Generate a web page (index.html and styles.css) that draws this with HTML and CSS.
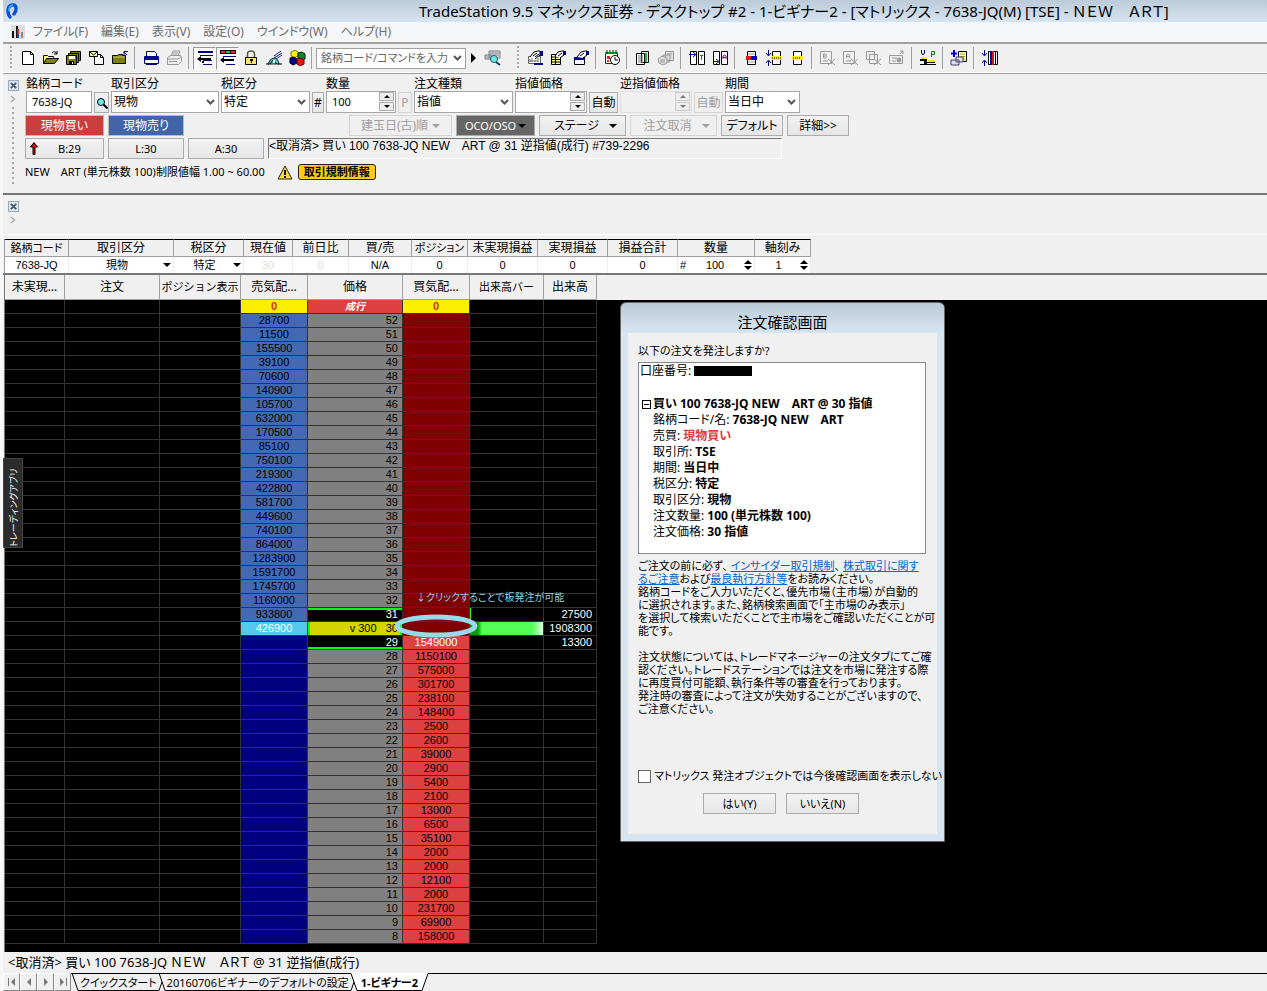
FILE: index.html
```html
<!DOCTYPE html>
<html lang="ja">
<head>
<meta charset="utf-8">
<title>TradeStation 9.5</title>
<link rel="stylesheet" href="styles.css">
</head>
<body>
<div class="app">
  <header class="titlebar">
    <svg class="logo" viewBox="0 0 14 18"><path d="M4 15C1 11 1 4 6 3c5-1 5 5 2 9" fill="none" stroke="#0b4fd8" stroke-width="3.4" stroke-linecap="round"/><path d="M3 9C3 5 5 3 7 3" fill="none" stroke="#3fb4ff" stroke-width="1.6"/></svg>
    <h1 class="title">TradeStation 9.5 マネックス証券 - デスクトップ #2 - 1-ビギナー2 - [マトリックス - 7638-JQ(M) [TSE] - ＮＥＷ　ＡＲＴ]</h1>
  </header>

  <nav class="menubar">
    <svg class="menu-logo" viewBox="0 0 14 14" shape-rendering="crispEdges"><path fill="#ddd" d="M0 0h14v14H0z"/><path fill="#111" d="M1 6h2v7H1zM5 1h2v12H5z"/><path fill="#d22" d="M6 4h2v5H6z"/><path fill="#24a" d="M6 9h2v4H6z"/><path fill="#888" d="M10 7h2v6h-2z"/></svg>
    <button>ファイル(F)</button><button>編集(E)</button><button>表示(V)</button><button>設定(O)</button><button>ウインドウ(W)</button><button>ヘルプ(H)</button>
  </nav>

  <div class="toolbar">
    <span class="grip"></span>
    <button class="tool" aria-label="新規"><svg viewBox="0 0 18 16"><path d="M3.500 1.500h8l3 3v10h-11z" fill="#fff" stroke="#000"/><path d="M11.500 1.500v3h3" fill="none" stroke="#000"/></svg></button>
    <button class="tool" aria-label="開く"><svg viewBox="0 0 18 16"><path d="M1.500 13.500v-8h4l1 1h5v2" fill="#ffff80" stroke="#000"/><path d="M1.500 13.500l3-5h12l-4 5z" fill="#808000" stroke="#000"/><path d="M10 3q3-3 5 1m0-3v3h-3" fill="none" stroke="#000"/></svg></button>
    <button class="tool" aria-label="すべて保存"><svg viewBox="0 0 18 16"><path d="M5.500 1.500h10v9h-10z" fill="#808000" stroke="#000"/><path d="M3.500 3.500h10v9h-10z" fill="#808000" stroke="#000"/><path d="M1.500 5.500h10v9h-10z" fill="#808000" stroke="#000"/><path d="M4 6h6v3H4z" fill="#fff"/><path d="M4 11h5v3H4z" fill="#000"/><path d="M7 12h1v2H7z" fill="#fff"/></svg></button>
    <button class="tool" aria-label="メール"><svg viewBox="0 0 18 16"><path d="M6.500 4.500h6l3 3v7h-9z" fill="#fff" stroke="#000"/><path d="M12.500 4.500v3h3" fill="none" stroke="#000"/><path d="M1.500 1.500h8v5h-8z" fill="#ffffa0" stroke="#000"/><path d="M2 2l3.500 3L9 2" fill="none" stroke="#000"/></svg></button>
    <button class="tool" aria-label="フォルダ"><svg viewBox="0 0 18 16"><path d="M1.500 13.500v-8h5l1-1h4v1h3v8z" fill="#808000" stroke="#000"/><path d="M2 7h12" stroke="#cc6"/><path d="M16 5l-3-3m0 3V1.500h4" fill="none" stroke="#008"/></svg></button>
    <span class="sep"></span>
    <button class="tool" aria-label="印刷"><svg viewBox="0 0 18 16"><path d="M4.500 1.500h8l2 2v3h-10z" fill="#fff" stroke="#008"/><path d="M2.500 6.500h14v7h-14z" fill="#fff" stroke="#008"/><path d="M3 7h13v3H3z" fill="#00a"/><path d="M4 14.500h11" stroke="#008"/></svg></button>
    <button class="tool" aria-label="プリンタ" disabled><svg viewBox="0 0 18 16"><g fill="#eee" stroke="#999"><path d="M6 6l2-5h7l-2 5z"/><path d="M2.500 7.500l3-2h10l1 2v4l-3 3h-11z"/><path d="M3 9h10l3-2M4 11.500h8M8 3h5M7 5h5"/></g></svg></button>
    <span class="sep"></span>
    <button class="tool pressed" aria-label="列表示"><svg viewBox="0 0 18 16"><path d="M2 1h15v2H2zM4 5h13v1H4zM7 10h9v1H7zM7 14h9v1H7z" fill="#008"/><path d="M1 9l4-3v6z"/><path d="M4 8h11v2H4z"/><path d="M6 11h2v2H6z"/></svg></button>
    <button class="tool pressed" aria-label="色付き列"><svg viewBox="0 0 18 16"><path d="M1 0h16v4H1z"/><path d="M2 1h4v2H2z" fill="#f22"/><path d="M7 1h4v2H7z" fill="#0c3"/><path d="M12 1h4v2h-4z" fill="#f22"/><path d="M4 6h13v1H4zM7 14h9v1H7z" fill="#008"/><path d="M1 10l4-3v6z"/><path d="M4 9h11v2H4z"/></svg></button>
    <button class="tool" aria-label="ロック"><svg viewBox="0 0 18 16"><path d="M5.500 7V4q0-3 3.500-3t3.500 3v3" fill="none" stroke="#554" stroke-width="1.500"/><path d="M3.500 7.500h11v7h-11z" fill="#ffe45c" stroke="#000"/><path d="M8 9h3v2H10v2H9v-2H8z"/></svg></button>
    <button class="tool" aria-label="通信"><svg viewBox="0 0 18 16"><path d="M9 6l7-5M9 8l8-5M11 9l6-4" stroke="#228" fill="none"/><path d="M3 14q2-6 6-6t5 6z" fill="#4cc" stroke="#223"/><path d="M5 14l3-4 4 4M1 14h3m9 0h4" stroke="#000" fill="none"/><path d="M8 10h2v3H8z" fill="#fff"/></svg></button>
    <button class="tool" aria-label="キューブ"><svg viewBox="0 0 18 16"><path d="M3 2l4-2 3 2v4L6 8 3 6z" fill="#fe1" stroke="#770"/><path d="M10 3l4-1 3 2v5l-4 1-3-2z" fill="#083" stroke="#020"/><path d="M2 8l4-1 3 2v4l-4 2-3-2z" fill="#009" stroke="#000"/><path d="M9 9l4-1 3 2v4l-4 2-3-2z" fill="#e11" stroke="#600"/></svg></button>
    <span class="sep"></span>
    <select class="command" aria-label="銘柄コード/コマンドを入力"><option>銘柄コード/コマンドを入力</option></select>
    <button class="go" aria-label="実行"></button>
    <button class="tool" aria-label="検索"><svg viewBox="0 0 18 16"><path d="M5 1h11v7H5zM1 5h6v4H1z" fill="#ddd" stroke="#778"/><path d="M6 3h9M6 5h9M2 7h4" stroke="#889"/><circle cx="10" cy="9" r="3.500" fill="#6ee" stroke="#356"/><path d="M12 12l4 3" stroke="#046" stroke-width="2"/></svg></button>
    <span class="grip wide"></span>
    <button class="tool" aria-label="分析"><svg viewBox="0 0 18 16"><path d="M2.500 6.500h12v7h-12z" fill="#fff" stroke="#666"/><path d="M4 12V9m2 3V8m3 4v-2m3 2V8m-9 3h10" stroke="#777"/><path d="M8 14h9" stroke="#008" stroke-width="2"/><path d="M4 7l4-5 4-1h2v4l-5 4M7 6l4-3M9 7l4-3" fill="#fff" stroke="#000"/><path d="M14 1h3v5h-3z" fill="#008"/></svg></button>
    <button class="tool" aria-label="表の書式"><svg viewBox="0 0 18 16"><path d="M2.500 4.500h9v10h-9z" fill="#ff9" stroke="#000"/><path d="M3 7h9M3 9.500h9M3 12h9M6.500 5v9" stroke="#000"/><path d="M6 6l3-4 4-1h2v4l-4 3M9 6l4-3" fill="#fff" stroke="#000"/><path d="M14 1h3v4h-3z" fill="#008"/></svg></button>
    <button class="tool" aria-label="ウィンドウ書式"><svg viewBox="0 0 18 16"><path d="M2.500 7.500h10v7h-10z" fill="#fff" stroke="#000"/><path d="M2 7h11v3H2z" fill="#008"/><path d="M5 7l4-5 4-1h2v4l-4 3M8 6l4-3" fill="#fff" stroke="#000"/><path d="M14 1h3v4h-3z" fill="#008"/></svg></button>
    <span class="sep"></span>
    <button class="tool" aria-label="スケジュール"><svg viewBox="0 0 18 16"><path d="M2.500 2.500h12v11h-12z" fill="#fff" stroke="#040"/><path d="M2 2h13v2H2z" fill="#0a3"/><path d="M4 0v4m3-4v4m3-4v4m3-4v4" stroke="#040"/><path d="M4 6h3v3H4zM4 10h2v2H4z" fill="#d22"/><circle cx="12" cy="10" r="4.500" fill="#fff" stroke="#000"/><path d="M12 7v3h3" stroke="#000" fill="none"/></svg></button>
    <span class="sep"></span>
    <button class="tool" aria-label="レポート"><svg viewBox="0 0 18 16"><path d="M7.500 1.500h7v11h-7zM2.500 3.500h8v11h-8z" fill="#fff" stroke="#000"/><path d="M4 6h5M4 8h5M4 10h5M4 12h5" stroke="#777"/><path d="M11 3h2v9h-2z" fill="#2b3"/></svg></button>
    <button class="tool" aria-label="配信" disabled><svg viewBox="0 0 18 16"><g fill="#ddd" stroke="#999"><path d="M8.500 1.500h8v9h-8zM6 5h7v7H6z"/><path d="M1 9l4-3 5 2v5l-4 2-4-2z"/><path d="M10 4h5M3 10h5M3 12h5"/></g></svg></button>
    <span class="sep"></span>
    <button class="tool" aria-label="T列"><svg viewBox="0 0 18 16"><path d="M2.500 1.500h6v13h-6zM10.500 1.500h6v13h-6z" fill="#fff" stroke="#000"/><path d="M1 4.500h6M5 2l3 2.500L5 7" fill="none" stroke="#00a"/><path d="M12 5.500h3M13.500 5v5" stroke="#080"/></svg></button>
    <button class="tool" aria-label="A列"><svg viewBox="0 0 18 16"><path d="M2.500 1.500h6v13h-6zM10.500 1.500h6v13h-6z" fill="#fff" stroke="#000"/><path d="M2 11.500h5M5 9l3 2.500L5 14" fill="none" stroke="#00a"/><path d="M12 9V6l1.500-1L15 6v3m-3-1.500h3" fill="none" stroke="#808"/></svg></button>
    <span class="sep"></span>
    <button class="tool" aria-label="売買行"><svg viewBox="0 0 18 16"><path d="M5.500 1.500h8v13h-8z" fill="#fff" stroke="#000"/><path d="M6 4h7M6 12h7" stroke="#999"/><path d="M4 6h6v4H4z" fill="#e11"/><path d="M9 6h6v4H9z" fill="#00c"/></svg></button>
    <button class="tool" aria-label="中央揃え"><svg viewBox="0 0 18 16"><path d="M7.500 1.500h8v13h-8z" fill="#fff" stroke="#000"/><path d="M6 6h11v4H6z" fill="#fe1"/><path d="M3.500 0v5M1 3l2.500 3L6 3M3.500 16v-5M1 13l2.500-3L6 13" fill="none" stroke="#008"/><path d="M7 8h1m1 0h1m1 0h1m1 0h1m1 0h1" stroke="#000"/></svg></button>
    <button class="tool" aria-label="行"><svg viewBox="0 0 18 16"><path d="M5.500 1.500h8v13h-8z" fill="#fff" stroke="#000"/><path d="M4 6h11v4H4z" fill="#fe1"/><path d="M5 8h1m1 0h1m1 0h1m1 0h1" stroke="#000"/></svg></button>
    <span class="sep"></span>
    <button class="tool" aria-label="B取消" disabled><svg viewBox="0 0 18 16"><g fill="none" stroke="#999"><path d="M1.500 1.500h11v12h-11zM4.500 4v4h2l1-1-1-1h-2m0-2h2l1 1-1 1M4 11h5M9 9l7 6M16 9l-7 6"/></g></svg></button>
    <button class="tool" aria-label="A取消" disabled><svg viewBox="0 0 18 16"><g fill="none" stroke="#999"><path d="M1.500 1.500h11v12h-11zM4.500 8V5l1.500-1 1.500 1v3m-3-1.500h3M4 11h5M9 9l7 6M16 9l-7 6"/></g></svg></button>
    <button class="tool" aria-label="全取消" disabled><svg viewBox="0 0 18 16"><g fill="#eee" stroke="#999"><path d="M1.500 1.500h8v8h-8zM4.500 4.500h8v9h-8z"/><path d="M9 9l7 6M16 9l-7 6"/></g></svg></button>
    <button class="tool" aria-label="成行決済" disabled><svg viewBox="0 0 18 16"><g fill="none" stroke="#999"><path d="M1.500 5.500h13v8h-13zM4 8h5M4 11h4M12 4l3-3m-3 0h3v3"/><circle cx="11" cy="10" r="2" fill="#999"/></g></svg></button>
    <span class="sep"></span>
    <button class="tool" aria-label="VP"><svg viewBox="0 0 18 16"><path d="M2.500 0v3l1.500 2 1.500-2V0" fill="none" stroke="#008"/><path d="M12.500 7V1.500h3v3h-3" fill="none" stroke="#080"/><path d="M2 7h6v2H2z" fill="#fe1"/><path d="M1 9h7v2H1zM5 11h3v3H5zM8 12h8v1H8zM1 14h16v1H1z"/><path d="M9 10h7v2H9z" fill="#fe1"/></svg></button>
    <span class="sep"></span>
    <button class="tool" aria-label="追加"><svg viewBox="0 0 18 16"><path d="M8.500 1.500h8v10h-8z" fill="#ffc" stroke="#000"/><path d="M10 4h5M10 6.500h5M10 9h5" stroke="#aa0"/><path d="M4 0v7M1 3.500h6" stroke="#00d" stroke-width="2"/><path d="M6 7h7v5H6zM1 10h8v5H1z" fill="#dde" stroke="#446"/></svg></button>
    <span class="sep"></span>
    <button class="tool" aria-label="列幅"><svg viewBox="0 0 18 16"><path d="M7.500 1.500h9v13h-9z" fill="#fff" stroke="#000"/><path d="M9 1h2v14H9z" fill="#00a"/><path d="M11 1h2v14h-2z" fill="#d11"/><path d="M14 1h1v14h-1z"/><path d="M3.500 0v5M1 3l2.500 3L6 3M3.500 16v-5M1 13l2.500-3L6 13" fill="none" stroke="#008"/></svg></button>
  </div>

  <section class="orderbar">
    <div class="handle"><button class="mini-close" aria-label="閉じる"><svg viewBox="0 0 10 10"><path d="M2 2l6 6M8 2l-6 6" stroke="#46586c" stroke-width="2"/></svg></button><svg class="chev" viewBox="0 0 6 8"><path d="M1 1l3.500 3L1 7" fill="none" stroke="#aaa" stroke-width="1.500"/></svg><span class="dots"></span></div>
    <div class="order">
      <div class="fields">
        <label class="field w-code"><span>銘柄コード</span><input class="box num" value="7638-JQ"></label>
        <button class="btn small w-search" aria-label="銘柄検索"><svg viewBox="0 0 12 12"><circle cx="5" cy="5" r="3.500" fill="#6ee" stroke="#000"/><path d="M7.500 7.500l4 4" stroke="#000" stroke-width="2"/></svg></button>
        <label class="field w-kind"><span>取引区分</span><select class="box"><option>現物</option></select></label>
        <label class="field w-tax"><span>税区分</span><select class="box"><option>特定</option></select></label>
        <button class="btn small w-hash">#</button>
        <label class="field w-qty"><span>数量</span><span class="spin"><input class="box num" value="100"><i class="arrows"><b></b><b></b></i></span></label>
        <button class="btn small w-p" disabled>P</button>
        <label class="field w-type"><span>注文種類</span><select class="box"><option>指値</option></select></label>
        <label class="field w-price"><span>指値価格</span><span class="spin"><input class="box num"><i class="arrows"><b></b><b></b></i></span></label>
        <button class="btn small w-auto">自動</button>
        <label class="field w-price"><span>逆指値価格</span><span class="spin off"><input class="box num" disabled><i class="arrows"><b></b><b></b></i></span></label>
        <button class="btn small w-auto" disabled>自動</button>
        <label class="field w-term"><span>期間</span><select class="box"><option>当日中</option></select></label>
      </div>
      <div class="actions">
        <button class="btn buy w-a">現物買い</button><button class="btn sell w-b">現物売り</button>
        <div class="actions right">
          <button class="btn w-c" disabled>建玉日(古)順<i class="tri"></i></button><button class="btn dark w-a">OCO/OSO<i class="tri"></i></button><button class="btn w-d">ステージ　<i class="tri"></i></button><button class="btn w-d" disabled>注文取消　<i class="tri"></i></button><button class="btn w-e">デフォルト</button><button class="btn w-e">詳細&gt;&gt;</button>
        </div>
      </div>
      <div class="actions prices">
        <button class="btn w-a up"><svg viewBox="0 0 8 13"><path d="M4 .500L7.500 5H5v7.500H3V5H.500z" fill="#e00" stroke="#000"/></svg><span>B:29</span></button><button class="btn w-b">L:30</button><button class="btn w-b">A:30</button>
        <output class="readout">&lt;取消済&gt; 買い 100 7638-JQ NEW　ART @ 31 逆指値(成行) #739-2296</output>
      </div>
      <div class="info"><span>NEW　ART (単元株数 100)制限値幅 1.00 ~ 60.00</span><svg class="warn" viewBox="0 0 16 15"><path d="M8 1l7 13H1z" fill="#fd2" stroke="#222" stroke-linejoin="round"/><path d="M8 5v5m0 1v2" stroke="#000" stroke-width="2"/></svg><button class="rule">取引規制情報</button></div>
    </div>
  </section>

  <section class="emptybar"><div class="handle"><button class="mini-close" aria-label="閉じる"><svg viewBox="0 0 10 10"><path d="M2 2l6 6M8 2l-6 6" stroke="#46586c" stroke-width="2"/></svg></button><svg class="chev" viewBox="0 0 6 8"><path d="M1 1l3.500 3L1 7" fill="none" stroke="#aaa" stroke-width="1.500"/></svg></div></section>

  <div class="strip">
    <table class="summary">
      <colgroup><col class="s64"><col class="s105"><col class="s70"><col class="s49"><col class="s56"><col class="s63"><col class="s56"><col class="s70"><col class="s70"><col class="s70"><col class="s77"><col class="s56"></colgroup>
      <thead><tr><th class="tight">銘柄コード</th><th>取引区分</th><th>税区分</th><th>現在値</th><th>前日比</th><th>買/売</th><th class="tight">ポジション</th><th>未実現損益</th><th>実現損益</th><th>損益合計</th><th>数量</th><th>軸刻み</th></tr></thead>
      <tbody><tr><td>7638-JQ</td><td><div class="pick"><span>現物</span><i class="tri"></i></div></td><td><div class="pick"><span>特定</span><i class="tri"></i></div></td><td class="faint">30</td><td class="faint">0</td><td>N/A</td><td>0</td><td>0</td><td>0</td><td>0</td><td><div class="pick"><em>#</em><span>100</span><i class="ud"></i></div></td><td><div class="pick"><span>1</span><i class="ud"></i></div></td></tr></tbody>
    </table>
  </div>

  <main class="stage">
    <table class="matrix">
      <colgroup><col class="m60"><col class="m95"><col class="m81"><col class="m67"><col class="m95"><col class="m67"><col class="m74"><col class="m53"></colgroup>
      <thead><tr><th>未実現…</th><th>注文</th><th class="tight">ポジション表示</th><th>売気配…</th><th>価格</th><th>買気配…</th><th class="tight">出来高バー</th><th>出来高</th></tr></thead>
      <tbody id="rows"></tbody>
    </table>
    <button class="side-tab">トレーディングアプリ</button>

    <section class="dialog" role="dialog" aria-labelledby="dlg-title">
      <h2 id="dlg-title">注文確認画面</h2>
      <div class="dialog-body">
        <p class="ask-text">以下の注文を発注しますか?</p>
        <div class="tree">
          <div class="acct">口座番号: <span class="mask"></span></div>
          <div class="node"><svg viewBox="0 0 9 9" shape-rendering="crispEdges"><path d="M.500.500h8v8h-8zM2 4.500h5" fill="none" stroke="#000"/></svg><b>買い 100 7638-JQ NEW　ART @ 30 指値</b></div>
          <div class="leaf">銘柄コード/名: <b>7638-JQ NEW　ART</b></div>
          <div class="leaf">売買: <b class="red">現物買い</b></div>
          <div class="leaf">取引所: <b>TSE</b></div>
          <div class="leaf">期間: <b>当日中</b></div>
          <div class="leaf">税区分: <b>特定</b></div>
          <div class="leaf">取引区分: <b>現物</b></div>
          <div class="leaf">注文数量: <b>100 (単元株数 100)</b></div>
          <div class="leaf">注文価格: <b>30 指値</b></div>
        </div>
        <p class="note">ご注文の前に必ず、 <a href="#">インサイダー取引規制</a>、 <a href="#">株式取引に関す<br>るご注意</a>および<a href="#">最良執行方針等</a>をお読みください。<br>銘柄コードをご入力いただくと、優先市場（主市場）が自動的<br>に選択されます。また、銘柄検索画面で「主市場のみ表示」<br>を選択して検索いただくことで主市場をご確認いただくことが可<br>能です。</p>
        <p class="note last">注文状態については、トレードマネージャーの注文タブにてご確<br>認ください。トレードステーションでは注文を市場に発注する際<br>に再度買付可能額、執行条件等の審査を行っております。<br>発注時の審査によって注文が失効することがございますので、<br>ご注意ください。</p>
        <label class="check"><input type="checkbox">マトリックス 発注オブジェクトでは今後確認画面を表示しない</label>
        <div class="answers"><button class="btn">はい(Y)</button><button class="btn">いいえ(N)</button></div>
      </div>
    </section>
  </main>

  <div class="status">&lt;取消済&gt; 買い 100 7638-JQ ＮＥＷ　ＡＲＴ @ 31 逆指値(成行)</div>

  <nav class="tabs">
    <button class="nav" aria-label="最初"><svg viewBox="0 0 10 8"><path d="M1 0h1v8H1zM8 0v8L4 4z"/></svg></button><button class="nav" aria-label="前"><svg viewBox="0 0 10 8"><path d="M7 0v8L3 4z"/></svg></button><button class="nav" aria-label="次"><svg viewBox="0 0 10 8"><path d="M3 0v8l4-4z"/></svg></button><button class="nav" aria-label="最後"><svg viewBox="0 0 10 8"><path d="M2 0v8l4-4zM8 0h1v8H8z"/></svg></button>
    <svg class="slant" viewBox="0 0 8 18"><path d="M0 .500h8M1 0l6 17.500h1" fill="none" stroke="#000"/></svg>
    <button class="tab">クイックスタート</button>
    <svg class="slant" viewBox="0 0 8 18"><path d="M0 .500h8M0 17.500h1L4 9M1 0l6 17.500h1" fill="none" stroke="#000"/></svg>
    <button class="tab">20160706ビギナーのデフォルトの設定</button>
    <svg class="slant" viewBox="0 0 8 18"><path d="M1 0l6 17h1V0z" fill="#fff"/><path d="M0 17.500h1L4 9M0 .500h1l6 17h1" fill="none" stroke="#000"/></svg>
    <button class="tab active">1-ビギナー2</button>
    <svg class="slant" viewBox="0 0 8 18"><path d="M0 0h7L1 17H0z" fill="#fff"/><path d="M0 17.500h1L7 .500h1" fill="none" stroke="#000"/></svg>
    <span class="rest"></span>
  </nav>
</div>
<script src="matrix.js"></script>
</body>
</html>
```

FILE: styles.css
```css
* { box-sizing: border-box; }
body { margin: 0; background: #f0f0f0; color: #000; font: 12px/14px "Noto Sans", "Noto Sans CJK JP", sans-serif; font-feature-settings: "palt"; }
button, input, select { font: inherit; font-feature-settings: inherit; color: inherit; margin: 0; padding: 0; border: 0; background: none; border-radius: 0; white-space: nowrap; }
h1, h2, p { margin: 0; font-weight: normal; }
i, em { font-style: normal; }
.app { min-height: 100vh; display: flex; flex-direction: column; border-left: 3px solid #f7f7f7; }

.titlebar { height: 22px; display: flex; align-items: center; background: linear-gradient(#bccbd9, #d7e4f1); }
.logo { width: 14px; height: 18px; margin-left: 3px; }
.title { margin-left: 399px; font-size: 15px; line-height: 22px; white-space: nowrap; }

.menubar { height: 22px; display: flex; align-items: center; gap: 13px; padding-bottom: 1px; background: #f5f6f7; border-bottom: 2px solid #a0a0a0; font-size: 12px; color: #6d6d6d; }
.menu-logo { width: 14px; height: 14px; margin: 0 -5px 0 8px; }

.toolbar { height: 29px; display: flex; align-items: center; border-bottom: 1px solid #fff; }
.tool { width: 23px; height: 23px; flex: none; display: grid; place-items: center; }
.tool svg { width: 18px; height: 16px; }
.tool.pressed { background: #f8f8f8; border: 1px solid; border-color: #999 #fff #fff #999; }
.sep { width: 8px; height: 22px; flex: none; background: linear-gradient(90deg, transparent 3px, #a0a0a0 3px, #a0a0a0 4px, transparent 4px); }
.grip { width: 13px; height: 24px; flex: none; background: linear-gradient(#aaa 2px, transparent 2px) 7px 0 / 2px 4px repeat-y; }
.grip.wide { width: 19px; background-position: 13px 0; }
.command { width: 150px; height: 21px; padding-left: 4px; border: 1px solid #a0a0a0; color: #666; font-size: 11px; }
.go { width: 15px; height: 16px; flex: none; display: grid; place-items: center; }
.go::before { content: ""; border: 5px solid transparent; border-left-color: #000; border-right: 0; }

select { appearance: none; background: #fff url("data:image/svg+xml,%3Csvg xmlns='http://www.w3.org/2000/svg' width='9' height='6'%3E%3Cpath d='M1 1l3.500 3.500L8 1' fill='none' stroke='%23555' stroke-width='2'/%3E%3C/svg%3E") no-repeat right 3px center; }

.orderbar { height: 122px; display: flex; border-top: 1px solid #a0a0a0; border-bottom: 2px solid #777; }
.handle { width: 22px; flex: none; display: flex; flex-direction: column; align-items: flex-start; padding: 6px 0 8px 5px; gap: 4px; }
.mini-close { width: 11px; height: 11px; border: 1px solid #9ab; background: #dde7f1; display: grid; }
.mini-close svg { width: 9px; height: 9px; }
.chev { width: 6px; height: 8px; margin-left: 2px; }
.dots { flex: 1; width: 8px; background: linear-gradient(#aaa 2px, transparent 2px) 4px 0 / 2px 5px repeat-y; }
.order { flex: 1; padding-top: 3px; min-width: 0; }
.fields { display: flex; align-items: flex-end; gap: 2px; padding-left: 1px; }
.field { display: flex; flex-direction: column; white-space: nowrap; }
.box { width: 100%; height: 22px; padding-left: 2px; border: 1px solid #a6a6a6; background-color: #fff; }
.num { padding: 0 0 2px 5px; font-size: 11px; }
.spin { display: flex; position: relative; }
.arrows { position: absolute; right: 2px; top: 1px; display: grid; gap: 1px; }
.arrows b { width: 15px; height: 9px; border: 1px solid #aaa; background: #eee; display: grid; place-items: center; }
.arrows b::before { content: ""; border: 3px solid transparent; border-bottom-color: #000; border-top: 0; }
.arrows b + b::before { border: 3px solid transparent; border-top-color: #000; border-bottom: 0; }
.off .box { background: #f0f0f0; border-color: #ddd; }
.off .arrows { opacity: .5; }
.btn { height: 21px; border: 1px solid #acacac; background: linear-gradient(#f2f2f2, #e6e6e6); display: flex; align-items: center; justify-content: center; gap: 4px; flex: none; }
.btn:disabled { color: #a0a0a0; border-color: #d4d4d4; background: #efefef; }
.small svg { width: 12px; height: 12px; }
.tri { border: 4px solid transparent; border-top-color: currentColor; border-bottom: 0; }
.btn.buy { background: #cb3e3e; border-color: #bbb; color: #fff; }
.btn.sell { background: #4265a8; border-color: #bbb; color: #fff; }
.btn.dark { background: #666; color: #fff; font-size: 11px; gap: 2px; }
.dark .tri { border-top-color: #000; }
.btn.up { justify-content: flex-start; padding-left: 4px; gap: 20px; }
.up svg { width: 8px; height: 13px; }
.actions { display: flex; gap: 4px; margin-top: 2px; }
.actions.right { margin: 0 0 0 161px; }
.prices .btn { font-size: 11px; }
.readout { width: 514px; height: 21px; border: 1px solid; border-color: #777 #fff #fff #777; white-space: nowrap; font-family: "Liberation Sans", "Noto Sans CJK JP", sans-serif; }
.info { display: flex; align-items: center; margin-top: 5px; font-size: 11px; line-height: 16px; white-space: nowrap; }
.warn { width: 16px; height: 15px; margin: 0 5px 0 12px; }
.rule { height: 16px; padding: 0 5px; border: 1px solid #222; border-radius: 3px; background: #fc1; font-weight: bold; line-height: 14px; }
.w-code { width: 66px; } .w-search { width: 15px; } .w-kind { width: 108px; } .w-tax { width: 89px; } .w-hash { width: 12px; } .w-qty { width: 70px; } .w-p { width: 14px; } .w-type { width: 99px; } .w-price { width: 72px; } .w-auto { width: 29px; } .w-term { width: 75px; }
.w-a { width: 79px; } .w-b { width: 76px; } .w-c { width: 103px; } .w-d { width: 87px; } .w-e { width: 62px; }

.emptybar { height: 40px; border-bottom: 1px solid #fff; }

.strip { height: 40px; padding: 4px 0 0 1px; border-bottom: 2px solid #777; }
table { border-collapse: separate; border-spacing: 0; table-layout: fixed; }
th, td { padding: 0; font-weight: normal; text-align: center; white-space: nowrap; }
.summary { width: 807px; border-left: 1px solid #a0a0a0; }
.summary th { height: 18px; border: 1px solid #a0a0a0; border-width: 1px 1px 1px 0; border-top-color: #000; }
.summary td { height: 16px; background: #fff; border-right: 1px solid #eee; font-size: 11px; font-family: "Liberation Sans", "Noto Sans CJK JP", sans-serif; }
.summary .faint { color: #ddd; }
.pick { display: flex; align-items: center; padding: 0 2px; font-size: 11px; }
.pick span { flex: 1; }
.ud { width: 8px; height: 10px; background: #000; clip-path: polygon(50% 0, 100% 40%, 0 40%, 0 60%, 100% 60%, 50% 100%, 0 60%, 0 40%); }
.s64 { width: 64px; } .s105 { width: 105px; } .s70 { width: 70px; } .s49 { width: 49px; } .s56 { width: 56px; } .s63 { width: 63px; } .s77 { width: 77px; }

.stage { flex: 1; position: relative; background: linear-gradient(#f0f0f0 25px, #000 25px); border-left: 1px solid #777; margin-left: 1px; }
.matrix { width: 592px; height: 100%; font: 11px/13px "Liberation Sans", "Noto Sans CJK JP", sans-serif; }
.matrix th { height: 25px; border-bottom: 1px solid #a0a0a0; border-right: 1px solid #a0a0a0; font: 12px/14px "Noto Sans", "Noto Sans CJK JP", sans-serif; }
.summary .tight, .matrix .tight { font-size: 11px; }
.matrix td { height: 14px; border-right: 1px solid #333; border-bottom: 1px solid #333; color: #fff; }
.matrix .fill td { height: auto; border-bottom: 0; }
.matrix .zero { background: #fbee00; color: #d62f2f; font-weight: bold; }
.matrix .market { background: #dc4040; color: #fff; font-weight: bold; font-style: italic; font-size: 10px; }
.matrix .ask { background: #4369b2; color: #000; }
.matrix .ask-best { background: #54c8ee; color: #fff; }
.matrix .navy { background: #000080; }
.matrix .price { background: #808080; color: #000; text-align: right; padding-right: 4px; }
.matrix .range { background: #000; color: #fff; }
.matrix .high { box-shadow: inset 0 2px #0f0; }
.matrix .low { box-shadow: inset 0 -2px #0f0; }
.matrix .last { background: #d4d400; color: #000; box-shadow: inset 2px 0 #0f0, inset -2px 0 #0f0; }
.matrix .maroon { background: #800000; position: relative; }
.matrix .bid { background: #dc4040; color: #000; }
.matrix .bid-best { background: #dc4040; color: #fff; }
.matrix .volume { text-align: right; padding-right: 4px; }
.matrix .bar { background: linear-gradient(90deg, #00a000 8px, #5f5 12px, #5f5 62px, #dfd 73px); }
.matrix .sliver { background: linear-gradient(90deg, #3f3 1px, #000 1px); }
.tip { position: absolute; z-index: 1; left: 13px; top: -4px; color: #8fd0e8; font: 10px/14px "Noto Sans CJK JP", sans-serif; font-feature-settings: "palt"; }
.ring { position: absolute; z-index: 2; left: -10px; top: -8px; width: 86px; height: 24px; }
.m60 { width: 60px; } .m95 { width: 95px; } .m81 { width: 81px; } .m67 { width: 67px; } .m74 { width: 74px; } .m53 { width: 53px; }
.side-tab { position: absolute; left: -2px; top: 183px; width: 20px; height: 90px; background: #2b2b2b; border: 1px solid #444; color: #fff; font-size: 9px; line-height: 14px; writing-mode: vertical-rl; text-orientation: sideways; transform: rotate(180deg); text-align: left; padding-right: 2px; }

.dialog { position: absolute; left: 615px; top: 27px; width: 325px; height: 540px; padding: 0 7px 7px; display: flex; flex-direction: column; border: 1px solid #666; border-radius: 6px 6px 0 0; background: linear-gradient(#bccbd9, #d7e4f1 30px); }
.dialog h2 { height: 30px; padding-top: 9px; font-size: 15px; line-height: 20px; text-align: center; }
.dialog-body { flex: 1; background: #f0f0f0; padding: 11px 0 0 10px; white-space: nowrap; font-size: 11px; }
.tree { width: 288px; height: 192px; margin-top: 4px; padding: 0 1px; border: 1px solid #828790; background: #fff; font-size: 12px; line-height: 16px; }
.mask { display: inline-block; width: 58px; height: 10px; background: #000; vertical-align: -1px; }
.node { display: flex; align-items: center; gap: 2px; margin-top: 17px; padding-left: 2px; }
.node svg { width: 9px; height: 9px; }
.leaf { padding-left: 13px; }
.red { color: #dc3c3c; }
.note { margin-top: 5px; line-height: 13px; }
.note.last { margin-top: 13px; }
.note a { color: #06c; }
.check { display: flex; align-items: center; gap: 3px; margin-top: 54px; }
.check input { appearance: none; width: 13px; height: 13px; flex: none; border: 1px solid #666; background: #fff; }
.answers { display: flex; gap: 10px; margin: 10px 0 0 65px; }
.answers .btn { width: 73px; }

.status { height: 21px; padding: 0 5px; font-size: 13px; line-height: 20px; white-space: nowrap; }
.tabs { height: 18px; display: flex; align-items: stretch; }
.nav { width: 17px; display: grid; place-items: center; border: 1px solid; border-color: #fff #888 #888 #fff; }
.nav svg { width: 10px; height: 8px; fill: #777; }
.slant { width: 8px; height: 18px; }
.tab { border: 1px solid #000; border-width: 1px 0; padding: 0 1px; font-size: 11px; line-height: 15px; }
.tab.active { border-top-color: #fff; background: #fff; font-weight: bold; padding: 0 3px; }
.rest { flex: 1; border-top: 1px solid #000; }
```

FILE: matrix.js
```js
const asks = [28700, 11500, 155500, 39100, 70600, 140900, 105700, 632000, 170500, 85100, 750100, 219300, 422800, 581700, 449600, 740100, 864000, 1283900, 1591700, 1745700, 1160000, 933800, 426900];
const bids = [1549000, 1150100, 575000, 301700, 238100, 148400, 2500, 2600, 39000, 2900, 5400, 2100, 13000, 6500, 35100, 2000, 2000, 12100, 2000, 231700, 69900, 158000];
const volumes = { 31: 27500, 30: 1908300, 29: 13300 };
const TOP = 52, LAST = 30, BOTTOM = 8;

const cell = (cls, text = "") => `<td class="${cls}">${text}</td>`;
const blank = cell("") + cell("") + cell("");
const ring = '<svg class="ring" viewBox="0 0 86 24"><ellipse cx="43" cy="12" rx="39" ry="9" fill="none" stroke="#9bd8ea" stroke-width="5"/></svg>';

let html = `<tr>${blank}${cell("zero", "0")}${cell("market", "成行")}${cell("zero", "0")}${cell("")}${cell("")}</tr>`;
for (let p = TOP; p >= BOTTOM; p--) {
  const ask = p > LAST ? cell("ask", asks[TOP - p]) : p === LAST ? cell("ask-best", asks[TOP - p]) : cell("navy");
  const mark = { 31: " range high", 30: " last", 29: " range low" }[p] || "";
  const price = cell("price" + mark, p === LAST ? "v 300 &nbsp; 30" : p);
  const over = p === 32 ? '<span class="tip">↓クリックすることで板発注が可能</span>' : p === LAST ? ring : "";
  const bid = p >= LAST ? cell("maroon", over) : cell(p === LAST - 1 ? "bid-best" : "bid", bids[LAST - 1 - p]);
  const bar = cell(p === LAST ? "bar" : p === 31 ? "sliver" : "");
  html += `<tr>${blank}${ask}${price}${bid}${bar}${cell("volume", volumes[p] || "")}</tr>`;
}
html += `<tr class="fill">${cell("").repeat(8)}</tr>`;
document.getElementById("rows").innerHTML = html;
```
